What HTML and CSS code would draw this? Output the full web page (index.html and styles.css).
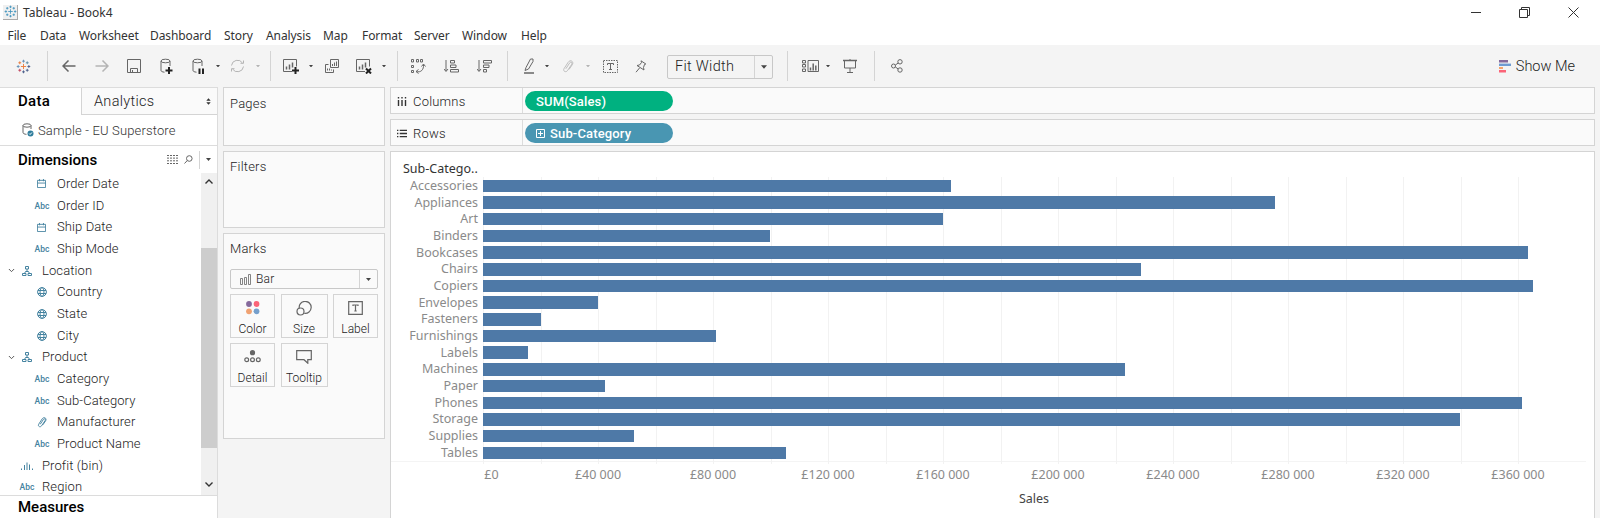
FILE: index.html
```
<!DOCTYPE html>
<html lang="en">
<head>
    <meta charset="UTF-8">
    <meta name="viewport" content="width=device-width, initial-scale=1.0">
    <title>Tableau - Book4</title>
    <link rel="stylesheet" href="styles.css">
</head>
<body>
    <!-- shared icons -->
    <svg class="defs">
        <symbol id="spark" viewBox="0 0 16 16">
            <path class="s-orange" d="M8 5.2v5.6M5.2 8h5.6"/>
            <path class="s-blue" d="M8 .8v3M6.5 2.3h3M2.3 6.5v3M.8 8h3"/>
            <path class="s-dark" d="M13.7 6.5v3M12.2 8h3M8 12.2v3M6.5 13.7h3"/>
            <path class="s-orange" d="M4 2.5v3M2.5 4h3"/>
            <path class="s-teal" d="M12 2.5v3M10.5 4h3"/>
            <path class="s-red" d="M4 10.5v3M2.5 12h3"/>
            <path class="s-dark" d="M12 10.5v3M10.5 12h3"/>
        </symbol>
        <symbol id="caret" viewBox="0 0 5 3"><path d="M0 0h5L2.5 3z" fill="currentColor"/></symbol>
        <symbol id="db" viewBox="0 0 14 18">
            <ellipse cx="6.5" cy="4" rx="4.5" ry="1.8"/>
            <path d="M2 4v9.5c0 .8 1.2 1.5 3.5 1.7M11 4v5"/>
        </symbol>
        <symbol id="clip" viewBox="0 0 14 16">
            <path d="M4.5 11.2l4.6-7c1.3-1.6 3.4-.2 2.4 1.6L6.3 13.5c-2 2.5-5.5.4-4-2.3l5-7.7C9.6.2 14 2.5 12.2 6.2L8.2 12"/>
        </symbol>
        <symbol id="cal" viewBox="0 0 10 10"><path d="M.5 1.5h9v8h-9zM.5 4.5h9M2.8 0v2.5M7.2 0v2.5"/></symbol>
        <symbol id="globe" viewBox="0 0 10 10"><circle cx="5" cy="5" r="4.4"/><ellipse cx="5" cy="5" rx="2" ry="4.4"/><path d="M1 3.5h8M1 6.5h8"/></symbol>
        <symbol id="tree" viewBox="0 0 10 10"><path d="M3.5.5h3v2.5h-3zM5 3v2.5M2.5 7.5l1-2h3l1 2M.5 7.5H4v2H.5zM6 7.5h3.5v2H6z"/></symbol>
        <symbol id="chev" viewBox="0 0 8 5"><path d="M1 .8l3 3 3-3"/></symbol>
    </svg>

    <div class="titlebar">
        <span class="app-icon"><svg width="13" height="13"><use href="#spark"/></svg></span>
        <span class="app-title">Tableau - Book4</span>
        <div class="win-buttons">
            <svg width="10" height="11" viewBox="0 0 10 11"><path d="M0 5.5h10"/></svg>
            <svg width="11" height="11" viewBox="0 0 11 11"><path d="M.5 2.5h8v8h-8zM2.5 2.5v-2h8v8h-2"/></svg>
            <svg width="11" height="11" viewBox="0 0 11 11"><path d="M.5.5l10 10M10.5.5l-10 10"/></svg>
        </div>
    </div>

    <div class="menubar">
        <span>File</span><span>Data</span><span>Worksheet</span><span>Dashboard</span><span>Story</span><span>Analysis</span><span>Map</span><span>Format</span><span>Server</span><span>Window</span><span>Help</span>
    </div>

    <div class="toolbar">
        <div class="group g-start">
            <svg width="15" height="15"><use href="#spark"/></svg>
        </div>
        <div class="group g-data">
            <svg width="14" height="12" viewBox="0 0 14 12"><path class="bold" d="M13.5 6H1.2M6.5.5L1 6l5.5 5.5"/></svg>
            <svg class="off" width="14" height="12" viewBox="0 0 14 12"><path class="bold" d="M.5 6h12.3M7.5.5L13 6l-5.5 5.5"/></svg>
            <svg width="14" height="14" viewBox="0 0 14 14"><path d="M.5.5h13v13H.5zM3.5 13.5v-4h7v4M5.5 11v2.5"/></svg>
            <svg width="14" height="18" viewBox="0 0 14 18"><use href="#db" width="14" height="18"/><path class="heavy" d="M10 10v7M6.5 13.5h7"/></svg>
            <svg width="14" height="18" viewBox="0 0 14 18"><use href="#db" width="14" height="18"/><path class="heavy" d="M8.5 11.5V17M12 11.5V17"/></svg>
            <svg class="caret" width="4" height="2.5"><use href="#caret"/></svg>
            <svg class="off" width="15" height="14" viewBox="0 0 15 14"><path d="M1.5 6.5a6 6 0 0 1 11-2.5M13.5 7.5a6 6 0 0 1-11 2.5M10.5 4.3h3V1.5M4.5 9.7h-3v2.8"/></svg>
            <svg class="caret off" width="4" height="2.5"><use href="#caret"/></svg>
        </div>
        <div class="group g-sheet">
            <svg width="16" height="16" viewBox="0 0 16 16"><path d="M9 13.5H.5v-12h13v7"/><path class="bold" d="M3.5 8.5v3M6.5 6.5v5M9.5 4.5v5"/><path class="heavy" d="M12.5 9v7M9 12.5h7"/></svg>
            <svg class="caret" width="4" height="2.5"><use href="#caret"/></svg>
            <svg width="14" height="14" viewBox="0 0 14 14"><path d="M5.5.5h8v8h-8zM3.5 5.5h-3v8h8v-3M7.5 5v2M9.5 3.5V7M11.5 2.5V7M2.5 9.5v2M4.5 9.5v2M6.5 10.5v1"/></svg>
            <svg width="16" height="16" viewBox="0 0 16 16"><path d="M9 13.5H.5v-12h13v7"/><path class="bold" d="M3.5 8.5v3M6.5 6.5v5M9.5 4.5v5"/><path class="heavy" d="M10 10.5l5 5M15 10.5l-5 5"/></svg>
            <svg class="caret" width="4" height="2.5"><use href="#caret"/></svg>
        </div>
        <div class="group g-sort">
            <svg width="15" height="15" viewBox="0 0 15 15"><path d="M.5.5h2V3h-2zM5.5.5h2V3h-2zM9.500.5h2V3h-2zM.5 6.5h2v2h-2zM.5 11.5h2v2h-2zM5 12.5c5 1.500 8-2 7.500-7M10.500 7.500l2-2.500 2 2.500M7.500 10.500L5 12.500l2.500 2"/></svg>
            <svg width="15" height="13" viewBox="0 0 15 13"><path d="M2 0v11M0 9l2 2.5L4 9M6.5.5h4V3h-4zM6.5 5H12v2.500H6.500zM6.500 9.500h8V12h-8z"/></svg>
            <svg width="15" height="13" viewBox="0 0 15 13"><path d="M2 0v11M0 9l2 2.5L4 9M6.5.5h8V3h-8zM6.5 5H12v2.500H6.500zM6.500 9.500h3V12h-3z"/></svg>
        </div>
        <div class="group g-format">
            <svg width="12" height="16" viewBox="0 0 12 16"><path d="M3 9.5L7.5 1H10v2.5L5.5 11 2 12.5z"/><path class="bold" d="M1 15h10"/></svg>
            <svg class="caret" width="4" height="2.5"><use href="#caret"/></svg>
            <svg class="off" width="12" height="14"><use href="#clip"/></svg>
            <svg class="caret off" width="4" height="2.5"><use href="#caret"/></svg>
            <svg width="15" height="13" viewBox="0 0 15 13"><path class="dots" d="M.5.5h14v12H.5z"/><path d="M4.500 5V3.500h6V5M7.500 3.500v6M6 9.500h3"/></svg>
            <svg width="12" height="13" viewBox="0 0 12 13"><path d="M6 .8L10.800 4l-1.300.5-1 3 .5 2.500-7-4.500L4.500 5l2-2.500zM4.500 8L1 12.200"/></svg>
        </div>
        <div class="fit-select"><span>Fit Width</span><i><svg class="caret" width="6" height="4"><use href="#caret"/></svg></i></div>
        <div class="group g-view">
            <svg width="17" height="12" viewBox="0 0 17 12"><path d="M.5.5h3V3h-3zM.5 4.500h3V7h-3zM.5 9h3v2.500h-3zM6 .5h10.500v11H6z"/><path class="bold" d="M8.500 7.500v3M11.200 3.500v7M13.800 5.500v5"/></svg>
            <svg class="caret" width="4" height="2.5"><use href="#caret"/></svg>
            <svg width="14" height="14" viewBox="0 0 14 14"><path class="bold" d="M0 1.500h14"/><path d="M1.500 2v7h11V2M7 9v4M4 13.500h6M7 0v1"/></svg>
        </div>
        <div class="group g-share">
            <svg width="12" height="14" viewBox="0 0 12 14"><circle cx="2.5" cy="7" r="2"/><circle cx="9" cy="2.8" r="2.2"/><circle cx="9" cy="11" r="2.2"/><path d="M4.3 6l3-2M4.3 8l3 2"/></svg>
        </div>
        <div class="show-me">
            <svg width="12" height="13" viewBox="0 0 12 13"><path fill="#85699c" d="M0 0h9v2.5H0z"/><path fill="#6f9bd1" d="M0 3.6h12V6H0z"/><path fill="#f5a26b" d="M0 7h4v2H0z"/><path fill="#fb6478" d="M0 10h7v2.5H0z"/></svg>
            <span>Show Me</span>
        </div>
    </div>

    <div class="workspace">
        <div class="data-pane">
            <div class="tabs">
                <div class="tab active">Data</div>
                <div class="tab">Analytics
                    <svg width="5" height="7" viewBox="0 0 5 7"><path fill="#333" d="M.3 2.8L2.5.3l2.2 2.5zM.3 4.2l2.2 2.5 2.2-2.5z"/></svg>
                </div>
            </div>
            <div class="source">
                <svg width="14" height="15" viewBox="0 0 14 15"><ellipse cx="5" cy="2.5" rx="4" ry="1.7"/><path d="M1 2.5v7c0 1 1.5 1.8 3.5 1.8M9 2.5V6"/><circle class="badge" cx="8.5" cy="10.5" r="3"/><path class="tick" d="M7.1 10.5l1 1 1.8-2"/></svg>
                <span>Sample - EU Superstore</span>
            </div>
            <div class="section-head">
                <span>Dimensions</span>
                <svg class="list-icon" width="11" height="9" viewBox="0 0 11 9"><path d="M0 .5h11M0 3.1h11M0 5.8h11M0 8.5h11"/></svg>
                <svg width="9" height="9" viewBox="0 0 9 9"><circle cx="5.3" cy="3.5" r="2.8"/><path d="M3.3 5.5l-2.8 3"/></svg>
                <i><svg class="caret" width="5" height="3"><use href="#caret"/></svg></i>
            </div>
            <div class="field-area">
                <div class="fields">
                    <div class="field lvl2"><svg width="9" height="9"><use href="#cal"/></svg><span>Order Date</span></div>
                    <div class="field lvl2"><b>Abc</b><span>Order ID</span></div>
                    <div class="field lvl2"><svg width="9" height="9"><use href="#cal"/></svg><span>Ship Date</span></div>
                    <div class="field lvl2"><b>Abc</b><span>Ship Mode</span></div>
                    <div class="field lvl1 parent"><svg class="chev" width="7" height="5"><use href="#chev"/></svg><svg width="10" height="10"><use href="#tree"/></svg><span>Location</span></div>
                    <div class="field lvl2"><svg width="10" height="10"><use href="#globe"/></svg><span>Country</span></div>
                    <div class="field lvl2"><svg width="10" height="10"><use href="#globe"/></svg><span>State</span></div>
                    <div class="field lvl2"><svg width="10" height="10"><use href="#globe"/></svg><span>City</span></div>
                    <div class="field lvl1 parent"><svg class="chev" width="7" height="5"><use href="#chev"/></svg><svg width="10" height="10"><use href="#tree"/></svg><span>Product</span></div>
                    <div class="field lvl2"><b>Abc</b><span>Category</span></div>
                    <div class="field lvl2"><b>Abc</b><span>Sub-Category</span></div>
                    <div class="field lvl2"><svg class="clip" width="10" height="12"><use href="#clip"/></svg><span>Manufacturer</span></div>
                    <div class="field lvl2"><b>Abc</b><span>Product Name</span></div>
                    <div class="field lvl1"><svg width="12" height="8" viewBox="0 0 12 8"><path d="M.5 6.5V8M3.5 3v5M6 .5V8M8.5 2.5V8M11.5 6.5V8"/></svg><span>Profit (bin)</span></div>
                    <div class="field lvl1"><b>Abc</b><span>Region</span></div>
                </div>
                <div class="scrollbar">
                    <svg width="8" height="5" viewBox="0 0 8 5"><path d="M.5 4.5L4 1l3.5 3.5"/></svg>
                    <div class="thumb"></div>
                    <svg width="8" height="5" viewBox="0 0 8 5"><path d="M.5.5L4 4 7.5.5"/></svg>
                </div>
            </div>
            <div class="measures">Measures</div>
        </div>

        <div class="cards">
            <div class="card pages">Pages</div>
            <div class="card filters">Filters</div>
            <div class="card marks">
                Marks
                <div class="mark-select">
                    <svg width="12" height="11" viewBox="0 0 12 11"><path d="M.5 4.5h2v6h-2zM4.5 3.5h2v7h-2zM8.5.5h2v10h-2z"/></svg>
                    <span>Bar</span>
                    <i><svg class="caret" width="5" height="3"><use href="#caret"/></svg></i>
                </div>
                <div class="mark-grid">
                    <div class="mark"><svg width="14" height="14" viewBox="0 0 14 14"><circle class="c-purple" cx="3" cy="3" r="2.9"/><circle class="c-red" cx="10.5" cy="3" r="2.9"/><circle class="c-orange" cx="3" cy="10.3" r="2.9"/><circle class="c-blue" cx="10.5" cy="10.3" r="2.9"/></svg><span>Color</span></div>
                    <div class="mark"><svg width="16" height="15" viewBox="0 0 16 15"><path d="M3.3 7.5a6 6 0 1 1 5 4.8"/><circle cx="4.5" cy="10.5" r="3.5"/></svg><span>Size</span></div>
                    <div class="mark"><svg width="15" height="14" viewBox="0 0 15 14"><path d="M.7.7h13.6v12.6H.7zM5 5V4h5v1M7.5 4v6M6.3 10h2.4"/></svg><span>Label</span></div>
                    <div class="mark"><svg width="17" height="13" viewBox="0 0 17 13"><circle fill="#666" stroke="none" cx="8.5" cy="2.7" r="2.6"/><circle cx="2.7" cy="9.7" r="1.9"/><circle cx="8.5" cy="9.7" r="1.9"/><circle cx="14.3" cy="9.7" r="1.9"/></svg><span>Detail</span></div>
                    <div class="mark"><svg width="16" height="14" viewBox="0 0 16 14"><path d="M.7.7h14.6v9h-3.5v3.5L8 9.7H.7z"/></svg><span>Tooltip</span></div>
                </div>
            </div>
        </div>

        <div class="sheet">
            <div class="shelf columns">
                <div class="shelf-name"><svg width="9" height="9" viewBox="0 0 9 9"><path d="M1 0v1.5M1 3v6M4.5 0v1.5M4.5 3v6M8 0v1.5M8 3v6"/></svg>Columns</div>
                <div class="pill green">SUM(Sales)</div>
            </div>
            <div class="shelf rows">
                <div class="shelf-name"><svg width="11" height="9" viewBox="0 0 11 9"><path d="M0 1h1.5M3 1h8M0 4.5h1.5M3 4.5h8M0 8h1.5M3 8h8"/></svg>Rows</div>
                <div class="pill blue"><svg width="9" height="9" viewBox="0 0 9 9"><path d="M.5.5h8v8h-8zM4.5 2v5M2 4.5h5"/></svg>Sub-Category</div>
            </div>
            <div class="viz">
                <div class="viz-head">Sub-Catego..</div>
                <div class="chart">
                    <div class="grid-lines"><i></i><i></i><i></i><i></i><i></i><i></i><i></i><i></i><i></i><i></i><i></i><i></i><i></i><i></i><i></i><i></i><i></i><i></i><i></i><i></i></div>
                    <div class="bar-row"><span>Accessories</span><div class="bar" style="width: 468px"></div></div>
                    <div class="bar-row"><span>Appliances</span><div class="bar" style="width: 792px"></div></div>
                    <div class="bar-row"><span>Art</span><div class="bar" style="width: 460px"></div></div>
                    <div class="bar-row"><span>Binders</span><div class="bar" style="width: 287px"></div></div>
                    <div class="bar-row"><span>Bookcases</span><div class="bar" style="width: 1045px"></div></div>
                    <div class="bar-row"><span>Chairs</span><div class="bar" style="width: 658px"></div></div>
                    <div class="bar-row"><span>Copiers</span><div class="bar" style="width: 1050px"></div></div>
                    <div class="bar-row"><span>Envelopes</span><div class="bar" style="width: 115px"></div></div>
                    <div class="bar-row"><span>Fasteners</span><div class="bar" style="width: 57.5px"></div></div>
                    <div class="bar-row"><span>Furnishings</span><div class="bar" style="width: 232.5px"></div></div>
                    <div class="bar-row"><span>Labels</span><div class="bar" style="width: 44.5px"></div></div>
                    <div class="bar-row"><span>Machines</span><div class="bar" style="width: 642px"></div></div>
                    <div class="bar-row"><span>Paper</span><div class="bar" style="width: 122px"></div></div>
                    <div class="bar-row"><span>Phones</span><div class="bar" style="width: 1039px"></div></div>
                    <div class="bar-row"><span>Storage</span><div class="bar" style="width: 977px"></div></div>
                    <div class="bar-row"><span>Supplies</span><div class="bar" style="width: 151px"></div></div>
                    <div class="bar-row"><span>Tables</span><div class="bar" style="width: 302.5px"></div></div>
                </div>
                <div class="axis"><span>£0</span><span>£40 000</span><span>£80 000</span><span>£120 000</span><span>£160 000</span><span>£200 000</span><span>£240 000</span><span>£280 000</span><span>£320 000</span><span>£360 000</span></div>
                <div class="axis-title">Sales</div>
            </div>
        </div>
    </div>
</body>
</html>
```

FILE: styles.css
```
* {
    margin: 0;
    padding: 0;
    box-sizing: border-box;
}

body {
    width: 1600px;
    height: 518px;
    overflow: hidden;
    font-family: Roboto, "Noto Sans", sans-serif;
    font-size: 13px;
    font-weight: 300;
    color: #222;
    background: #f4f4f4;
}

svg {
    display: block;
    flex: none;
    fill: none;
    stroke: #666;
    stroke-width: 1;
}

.defs {
    position: absolute;
    width: 0;
    height: 0;
}

.bold { stroke-width: 1.5; }
.heavy { stroke: #222; stroke-width: 2; }
.dots { stroke-dasharray: 1.5 1; }
.off { stroke: #b4b4b4; color: #b4b4b4; }
.caret { stroke: none; color: #444; }
.caret.off { color: #b4b4b4; }

.s-orange { stroke: var(--tint, #eb7d3c); }
.s-blue { stroke: var(--tint, #6590b5); }
.s-dark { stroke: var(--tint, #4c5f8c); }
.s-teal { stroke: var(--tint, #5f8fa8); }
.s-red { stroke: var(--tint, #c0405a); }

/* title bar and menu */
.titlebar {
    display: flex;
    align-items: center;
    height: 24px;
    padding-left: 3px;
    background: #fff;
    font-family: "Noto Sans", sans-serif;
    font-size: 12px;
    font-weight: 400;
    color: #333;
}

.app-icon {
    --tint: #3f93bd;
    display: flex;
    align-items: center;
    justify-content: center;
    width: 15px;
    height: 15px;
    margin-right: 5px;
    background: #f0f0f0;
    border-right: 1px solid #aaa;
    border-bottom: 1px solid #aaa;
}

.win-buttons {
    display: flex;
    align-items: center;
    gap: 38px;
    margin-left: auto;
    padding-right: 21px;
}

.win-buttons svg { stroke: #333; }

.menubar {
    display: grid;
    grid-template-columns: 32.5px 39px 71px 74px 42px 57px 39px 52px 48px 59px 60px;
    align-items: center;
    height: 21px;
    padding: 1px 0 0 7.5px;
    background: #fff;
    font-family: "Noto Sans", sans-serif;
    font-size: 12px;
    font-weight: 400;
    letter-spacing: -0.1px;
    color: #333;
}

/* toolbar */
.toolbar {
    display: flex;
    align-items: center;
    height: 42px;
}

.group {
    display: grid;
    align-items: center;
    justify-items: center;
    height: 30px;
    border-right: 1px solid #d4d4d4;
}

.g-start { width: 48px; padding-right: 1px; }
.g-data { grid-template-columns: 32px 33px 32px 32px 32px 8px 30px 12px; width: 223px; padding-left: 5px; }
.g-sheet { grid-template-columns: 32px 8px 34px 30px 10px; width: 127px; padding-left: 4px; }
.g-sort { grid-template-columns: 33px 33px 33px; width: 110px; padding-left: 4px; }
.g-format { grid-template-columns: 30px 6px 36px 4px 40px 22px; width: 159px; padding-left: 6px; border: none; }
.g-view { grid-template-columns: 32px 4px 40px; width: 88px; padding-left: 6px; border-left: 1px solid #d4d4d4; margin-left: 14px; }
.g-share { width: 44px; border: none; }

.fit-select {
    display: flex;
    align-items: center;
    width: 106px;
    height: 24px;
    margin-top: 1px;
    padding-left: 7px;
    border: 1px solid #c8c8c8;
    border-radius: 2px;
    font-size: 14.5px;
    letter-spacing: 0.3px;
}

.fit-select i {
    display: flex;
    align-items: center;
    justify-content: center;
    width: 18px;
    height: 100%;
    margin-left: auto;
    border-left: 1px solid #d4d4d4;
}

.show-me {
    display: flex;
    align-items: center;
    gap: 5px;
    margin-left: auto;
    padding-right: 25px;
    font-size: 14.5px;
}

.show-me svg { stroke: none; }

.workspace {
    display: flex;
    height: 431px;
}

/* data pane */
.data-pane {
    display: flex;
    flex-direction: column;
    width: 218px;
    background: #fff;
    border-top: 1px solid #dcdcdc;
    border-right: 1px solid #dcdcdc;
}

.tabs {
    display: flex;
    height: 27px;
}

.tab {
    display: flex;
    align-items: center;
    justify-content: space-between;
    flex: 1;
    padding: 1px 6px 0 12px;
    background: #fafafa;
    border-left: 1px solid #d4d4d4;
    border-bottom: 1px solid #d4d4d4;
    font-size: 14.5px;
    letter-spacing: 0.3px;
}

.tab svg { stroke: none; }

.tab.active {
    flex: none;
    width: 81px;
    padding: 0 0 1px 18px;
    background: #fff;
    border: none;
    font-weight: 500;
    font-size: 15px;
    color: #000;
}

.source {
    display: flex;
    align-items: center;
    gap: 2px;
    height: 31px;
    padding-left: 22px;
    border-bottom: 1px solid #dcdcdc;
    letter-spacing: 0.15px;
    color: #333;
}

.badge { fill: #2f7d9c; stroke: none; }
.tick { stroke: #fff; }

.section-head {
    display: flex;
    align-items: center;
    height: 27px;
    padding-left: 18px;
    font-size: 15px;
    font-weight: 500;
    color: #000;
}

.section-head span { width: 149px; }
.list-icon { margin-right: 6px; stroke-dasharray: 2 1; }

.section-head i {
    display: flex;
    align-items: center;
    justify-content: center;
    width: 18px;
    height: 18px;
    margin-left: auto;
    border-left: 1px solid #d4d4d4;
}

.field-area {
    display: flex;
    height: 322px;
}

.fields {
    flex: 1;
    overflow: hidden;
}

.field {
    display: grid;
    grid-template-columns: 30px 1fr;
    align-items: center;
    height: 21.68px;
    line-height: 14px;
    letter-spacing: 0.1px;
}

.field svg, .field b { justify-self: center; stroke: #4583a0; }
.field b { font-size: 8.5px; font-weight: 500; color: #4583a0; }
.field svg { margin-right: 1px; }
.field .clip { stroke-width: 1.3; }
.lvl2 { padding-left: 27px; }
.lvl1 { padding-left: 12px; }
.lvl1.parent { grid-template-columns: 12px 15px 1fr; column-gap: 2px; padding-left: 6px; }
.parent span { padding-left: 5px; }
.field .chev { stroke: #444; }

.scrollbar {
    display: flex;
    flex-direction: column;
    align-items: center;
    width: 16px;
    padding: 6px 0;
    background: #f0f0f0;
}

.scrollbar svg { stroke: #333; stroke-width: 1.4; }

.thumb {
    width: 16px;
    height: 200px;
    margin: 64px 0 34px;
    background: #cdcdcd;
}

.measures {
    flex: 1;
    padding: 3px 0 0 18px;
    border-top: 1px solid #dcdcdc;
    font-size: 15px;
    font-weight: 500;
    line-height: 17px;
    color: #000;
}

/* cards */
.cards {
    display: flex;
    flex-direction: column;
    gap: 5px;
    width: 162px;
    margin-left: 5px;
}

.card {
    padding: 7px 6px;
    background: #fafafa;
    border: 1px solid #d4d4d4;
    letter-spacing: 0.2px;
}

.pages { height: 59px; padding-top: 8px; }
.filters { height: 77px; }
.marks { height: 206px; }

.mark-select {
    display: flex;
    align-items: center;
    width: 148px;
    height: 20px;
    margin-top: 13px;
    padding-left: 9px;
    border: 1px solid #c8c8c8;
    border-radius: 2px;
    font-size: 12px;
}

.mark-select > svg { stroke-width: 0.8; }
.mark-select span { margin-left: 4px; }

.mark-select i {
    display: flex;
    align-items: center;
    justify-content: center;
    width: 18px;
    height: 100%;
    margin-left: auto;
    border-left: 1px solid #d4d4d4;
}

.mark-grid {
    display: grid;
    grid-template-columns: 45px 47px 45px;
    gap: 5px;
    margin-top: 5px;
    column-gap: 5.5px;
}

.mark {
    display: flex;
    flex-direction: column;
    align-items: center;
    justify-content: space-between;
    height: 44px;
    padding: 6px 0 1px;
    border: 1px solid #d4d4d4;
    font-size: 12px;
    letter-spacing: 0;
}

.mark svg { stroke-width: 1.2; }
.c-purple { fill: #85699c; stroke: none; }
.c-red { fill: #fb6478; stroke: none; }
.c-orange { fill: #f0a272; stroke: none; }
.c-blue { fill: #76a0cc; stroke: none; }

/* shelves */
.sheet {
    display: flex;
    flex-direction: column;
    gap: 5px;
    width: 1205px;
    margin-left: 5px;
}

.shelf {
    display: flex;
    align-items: center;
    height: 27px;
    background: #fafafa;
    border: 1px solid #d4d4d4;
}

.shelf-name {
    display: flex;
    align-items: center;
    gap: 6px;
    width: 132px;
    height: 100%;
    padding: 1px 0 0 6px;
    border-right: 1px solid #dcdcdc;
    letter-spacing: 0.2px;
}

.shelf-name svg { width: 10px; stroke: #333; stroke-width: 1.4; }

.pill {
    display: flex;
    align-items: center;
    gap: 5px;
    width: 148px;
    height: 20px;
    margin-left: 2px;
    padding: 1px 0 0 11px;
    border-radius: 10px;
    font-weight: 500;
    letter-spacing: 0.15px;
    color: #fff;
}

.pill svg { stroke: #fff; }
.green { background: #00b180; }
.blue { background: #4996b2; }

/* chart */
.viz {
    flex: 1;
    background: #fff;
    border: 1px solid #d4d4d4;
    border-bottom: none;
    font-family: "Noto Sans", sans-serif;
    font-size: 12.5px;
    font-weight: 400;
    color: #8a8a8a;
}

.viz-head {
    height: 25px;
    padding: 8px 0 0 12px;
    line-height: 18px;
    color: #333;
}

.chart {
    position: relative;
    width: 1195px;
    border-bottom: 1px solid #f4f4f4;
}

.grid-lines {
    position: absolute;
    top: 0;
    left: 92px;
    display: flex;
    height: 287px;
}

.grid-lines i {
    width: 57.5px;
    border-left: 1px solid #f2f2f2;
}

.grid-lines i:last-child { display: none; }

.bar-row {
    position: relative;
    display: flex;
    align-items: center;
    height: 16.7px;
}

.bar-row span {
    width: 87px;
    margin-right: 5.3px;
    padding-top: 1px;
    line-height: 16px;
    text-align: right;
}

.bar {
    height: 12.5px;
    margin-top: 1px;
    background: #4e79a7;
}

.axis {
    display: flex;
    margin: 4px 0 0 34.5px;
    line-height: 18px;
}

.axis span {
    width: 115px;
    flex: none;
    text-align: center;
}

.axis span:first-child { padding-left: 17px; }

.axis-title {
    width: 60px;
    margin: 6px 0 0 613px;
    line-height: 18px;
    text-align: center;
    color: #444;
}
```
